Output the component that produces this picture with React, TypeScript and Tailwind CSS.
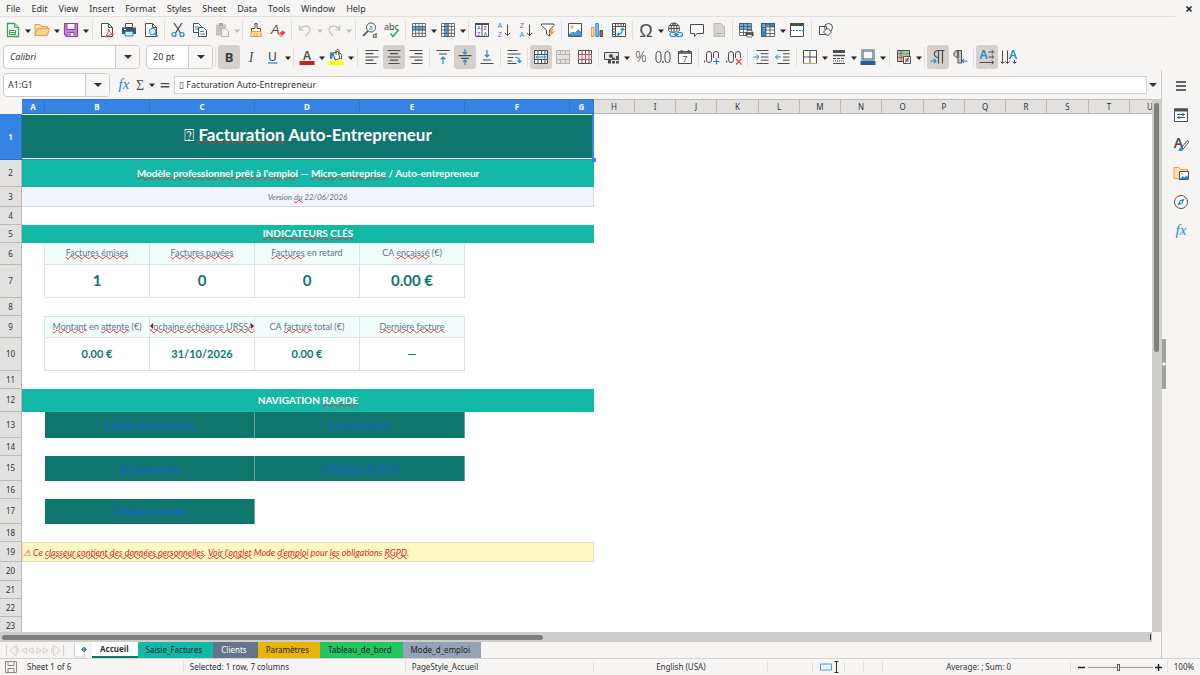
import type { ReactNode } from "react";

const G = "#4d4d4d";
const B = "#1e8bcd";
const SANS = "Liberation Sans, sans-serif";

const line = { fill: "none", stroke: G, strokeWidth: 1 } as const;
const blue = { fill: "none", stroke: B, strokeWidth: 1 } as const;

const grid3 = (
  <path d="M1.5 1.5h13v13h-13zM1.5 4.5h13M1.5 8h13M1.5 11.3h13M4.7 1.5v13M8 1.5v13M11.3 1.5v13" {...line} />
);

const icons: Record<string, ReactNode> = {
  new: (
    <>
      <path d="M2.5 1.5h7l4 4v9h-11z" fill="#fff" stroke="#3aa655" strokeWidth="1.3" />
      <path d="M9.5 1.5v4h4" fill="#b6e3c0" stroke="#3aa655" />
      <path d="M4 8h7v5H4z" fill="#3aa655" />
      <path d="M5 9.5h5M5 11.5h5" stroke="#fff" />
    </>
  ),
  open: (
    <>
      <path d="M1 13.5v-11h5l1.5 2h6v3" fill="#fbe3b5" stroke="#eb9a3f" />
      <path d="M1 13.5L3.5 6.5h12l-2.2 7z" fill="#fbd48c" stroke="#eb9a3f" />
    </>
  ),
  save: (
    <>
      <path d="M1.5 1.5h13v13h-11l-2-2z" fill="#c783d3" stroke="#9a3fb0" strokeWidth="1.2" />
      <path d="M4 1.5h8v6H4z" fill="#fff" stroke="#9a3fb0" />
      <path d="M5 10.5h6v4H5z" fill="#fff" stroke="#9a3fb0" />
      <path d="M7 11.5v2.5" stroke="#9a3fb0" strokeWidth="1.4" />
    </>
  ),
  pdf: (
    <>
      <path d="M2.5 1.5h7l4 4v9h-11z" fill="#fff" stroke={G} />
      <path d="M9.5 1.5v4h4" {...line} />
      <path d="M6 15c2-2 4-6 3.5-8 .5 3 3 5 5.5 5.5-3-.3-6 .5-9 2.5" fill="#fff" stroke="#e0454f" />
    </>
  ),
  print: (
    <>
      <path d="M4.5 1.5h7v4h-7z" fill="#fff" stroke={G} />
      <path d="M1 5.5h14v6.5H1z" fill="#4a5258" />
      <path d="M4 9.5h8v4.5H4z" fill="#d7ecfa" stroke={B} />
      <path d="M3 7.5h2" stroke="#fff" />
    </>
  ),
  preview: (
    <>
      <path d="M2.5 1.5h7l4 4v9h-11z" fill="#fff" stroke={G} />
      <path d="M9.5 1.5v4h4" {...line} />
      <circle cx="9.5" cy="9.5" r="3.2" fill="#d7ecfa" stroke={B} />
      <path d="M11.8 11.8l3 3" stroke={B} strokeWidth="1.5" />
    </>
  ),
  cut: (
    <>
      <path d="M4 1l6.5 10M12 1L5.5 11" {...line} strokeWidth="1.3" />
      <circle cx="4" cy="12.5" r="2" {...blue} strokeWidth="1.2" />
      <circle cx="12" cy="12.5" r="2" {...blue} strokeWidth="1.2" />
    </>
  ),
  copy: (
    <>
      <path d="M1.5 1.5h5l3 3v6h-8z" fill="#fff" stroke={G} />
      <path d="M3 5h4M3 7h4" {...blue} />
      <path d="M6.5 5.5h5l3 3v6h-8z" fill="#fff" stroke={G} />
      <path d="M8 9.5h4M8 12h5" {...blue} />
    </>
  ),
  paste: (
    <>
      <path d="M2 2.5h10v11H2z" fill="#c6c4c1" />
      <path d="M5 1h4v3H5z" fill="#a9a7a4" />
      <path d="M7.5 6.5h4l3 3v5h-7z" fill="#f3f2f1" stroke="#b4b2af" />
    </>
  ),
  brush: (
    <>
      <path d="M7 1.5h2v5h3.5v3h-9v-3H7z" fill="#fff" stroke={G} />
      <path d="M3.5 9.5h9l1 5h-11z" fill="#fbd9a0" stroke="#eb9a3f" />
      <path d="M6 12v2.5M9 12v2.5" stroke="#eb9a3f" />
    </>
  ),
  clear: (
    <>
      <text x="1" y="12" fontSize="13" fontStyle="italic" fill={G} fontFamily={SANS}>A</text>
      <path d="M8 12.5l4.5-4 3 2-4.5 4.5z" fill="#e5484d" />
      <path d="M8 12.5l1.5-1.3 2.5 2.3-1 1.5z" fill="#f6a6a8" />
    </>
  ),
  undo: <path d="M2.5 3.5v4.5h4.5M2.5 8c3-5 10-5 10.500-.5.2 2.500-2 4.500-4.500 6.500" {...line} stroke="#c2c0bd" strokeWidth="1.200" />,
  redo: <path d="M13.500 3.500v4.500h-4.500M13.500 8c-3-5-10-5-10.500-.5-.2 2.500 2 4.500 4.500 6.500" {...line} stroke="#c2c0bd" strokeWidth="1.200" />,
  find: (
    <>
      <circle cx="9" cy="5.5" r="4.5" fill="#fff" stroke={G} />
      <path d="M6 9l-5 5" stroke={G} strokeWidth="1.7" />
      <text x="6.8" y="7.8" fontSize="7" fill={B} fontFamily={SANS}>a</text>
      <text x="10.500" y="15.500" fontSize="7.500" fontWeight="700" fill={G} fontFamily={SANS}>d</text>
    </>
  ),
  spell: (
    <>
      <text x="0" y="7.5" fontSize="9" fill={G}>abc</text>
      <path d="M6.5 11.5l2.5 3 5.5-6.5" fill="none" stroke="#3aa655" strokeWidth="1.5" />
    </>
  ),
  rows: (
    <>
      <path d="M1 1h14v14H1z" fill="#fff" />
      <path d="M1 4.5h14v4H1z" fill="#5eb3ea" />
      <g opacity=".8">{grid3}</g>
    </>
  ),
  cols: (
    <>
      <path d="M1 1h14v14H1z" fill="#fff" />
      <path d="M4.5 1h4.5v14H4.5z" fill="#5eb3ea" />
      <g opacity=".8">{grid3}</g>
    </>
  ),
  sort: (
    <>
      <path d="M1.5 1.5h13v13h-13zM8 3v11.5" fill="#fff" stroke={G} />
      <path d="M1 1h14v2H1z" fill={G} />
      <g fontSize="5" fontWeight="700" fontFamily={SANS} textAnchor="middle">
        <text x="4.8" y="7.7" fill={B}>A</text>
        <text x="4.8" y="13.7" fill="#a64ac9">Z</text>
        <text x="11.3" y="7.7" fill="#a64ac9">Z</text>
        <text x="11.3" y="13.7" fill={B}>A</text>
      </g>
    </>
  ),
  asc: (
    <>
      <g fontSize="7" fontFamily={SANS} textAnchor="middle">
        <text x="3.8" y="6.2" fill={B}>A</text>
        <text x="3.8" y="14.8" fill="#a64ac9">Z</text>
      </g>
      <path d="M11.5 2.5v11M8.8 10.8l2.7 2.7 2.7-2.7" {...line} />
    </>
  ),
  desc: (
    <>
      <g fontSize="7" fontFamily={SANS} textAnchor="middle">
        <text x="3.8" y="6.2" fill="#a64ac9">Z</text>
        <text x="3.8" y="14.8" fill={B}>A</text>
      </g>
      <path d="M11.5 2.5v11M8.8 10.8l2.7 2.7 2.7-2.7" {...line} />
    </>
  ),
  filter: (
    <>
      <path d="M1.5 2h12.5v1.5L9.5 8v6l-3-2V8l-5-4.5z" fill="#fff" stroke={G} />
      <path d="M12 6.5L8.5 11h2.5l-1.5 4 5-5.5H12l1.5-3z" fill="#f39b3b" />
    </>
  ),
  image: (
    <>
      <path d="M1.5 1.5h13v13h-13z" fill="#fff" stroke={G} />
      <circle cx="5" cy="5" r="1.7" fill="#f5b251" />
      <path d="M2 13l4-3 2 1.5L11 8l3.5 3v3H2z" fill="#4e9fd8" stroke="#2775ad" />
    </>
  ),
  chart: (
    <>
      <path d="M2.500 5.500h2.500v9H2.500z" fill="#fbd48c" stroke="#eb9a3f" />
      <path d="M6.800 1.500h2.500v13H6.800z" fill="#8cc7ef" stroke={B} />
      <path d="M11 8.500h2.500v6H11z" fill="#7c7c7c" stroke={G} />
    </>
  ),
  pivot: (
    <>
      <path d="M1.5 1.5h13v13h-13zM1.5 4.5h13M4.5 1.5v13" fill="#fff" stroke={G} />
      <path d="M7 1.5v3M10 1.5v3M12.5 1.5v3M1.5 7h3M1.5 10h3M1.5 12.5h3" {...line} />
      <path d="M6.5 12.5c4 0 5-2 5-6M9.8 8l1.7-1.7L13.2 8M8 10.800l-1.700 1.700L8 14" {...blue} strokeWidth="1.2" />
    </>
  ),
  omega: <text x="8" y="14.500" fontSize="18" textAnchor="middle" fill={G} fontFamily={SANS}>Ω</text>,
  link: (
    <>
      <circle cx="7" cy="6.5" r="5.5" {...line} />
      <path d="M7 1v11M1.5 6.5h11M2.5 3.5h9M2.5 9.5h9M7 1c-4 3-4 8 0 11M7 1c4 3 4 8 0 11" {...line} />
      <path d="M2.5 9.5h13v6h-13z" fill="#f6f5f4" />
      <rect x="3" y="10.5" width="6" height="4" rx="2" {...blue} strokeWidth="1.2" />
      <rect x="9.5" y="10.5" width="6" height="4" rx="2" {...blue} strokeWidth="1.2" />
      <path d="M7 12.5h5" {...blue} />
    </>
  ),
  comment: <path d="M1.5 2.5h13v9H8l-2.5 3v-3h-4z" fill="#fff" stroke={G} />,
  header: (
    <>
      <path d="M3 1.5h7l3.5 3.5v9.5H3z" fill="#d5d3d1" stroke="#bbb9b6" />
      <path d="M5 11.5h6" stroke="#aaa" />
    </>
  ),
  printArea: (
    <>
      <path d="M1 1h12v12H1z" fill="#fff" />
      <path d="M1 1h12v6H1z" fill="#5eb3ea" />
      <path d="M1.5 1.5h12v12h-12zM1.5 4.5h12M1.5 7.5h12M1.5 10.5h12M5.5 1.5v12M9.5 1.5v12" {...line} opacity=".8" />
      <path d="M7.5 10h8v4h-8z" fill={G} />
      <path d="M9 8.500h5v2H9zM9 12.500h5v2.500H9z" fill="#fff" stroke={G} strokeWidth=".7" />
    </>
  ),
  freeze: (
    <>
      <path d="M1.5 1.5h13v13h-13z" fill="#fff" />
      <path d="M1 1h14v4H6v10H1z" fill="#2f86c8" />
      <path d="M1.5 1.5h13v13h-13zM1.5 5h13M6 8h8.500M6 11.500h8.500M6 1.500v13M10 1.500v13" {...line} opacity=".8" />
      <path d="M4 0v9M0 4h9" stroke="#9fd2f3" strokeDasharray="1 1" />
    </>
  ),
  split: (
    <>
      <path d="M1.5 1.5h13v13h-13z" fill="#fff" stroke={G} />
      <path d="M1 1h14v3H1z" fill={G} />
      <path d="M1 8.5h14" stroke={B} strokeDasharray="2 1" />
    </>
  ),
  shapes: (
    <>
      <path d="M1.5 4.5h7v8h-7z" {...line} />
      <circle cx="10.5" cy="5.5" r="4" {...line} />
      <path d="M9.5 6l4 4-4 4-4-4z" fill="#f6f5f4" stroke={G} />
    </>
  ),
  bold: <text x="8" y="13" fontSize="13" fontWeight="700" textAnchor="middle" fill="#3a3a3a">B</text>,
  italic: <text x="8" y="13" fontSize="14" fontStyle="italic" textAnchor="middle" fill={G} fontFamily="Liberation Serif, serif">I</text>,
  underline: (
    <>
      <text x="7.500" y="11.500" fontSize="12" textAnchor="middle" fill="#3a3a3a">U</text>
      <path d="M3 14h9.500" stroke={B} strokeWidth="1.2" />
    </>
  ),
  fontColor: (
    <>
      <text x="8" y="10.500" fontSize="12" fontWeight="600" textAnchor="middle" fill={G}>A</text>
      <path d="M.5 12h15v4H.5z" fill="#c9211e" />
    </>
  ),
  highlight: (
    <>
      <path d="M5 4l5-1.5 2 7L7 11z" fill="#fff" stroke={G} />
      <path d="M8 6V2c0-2 3-2 3 0v3M12 4c1.5 1 2 3 1.5 6" {...line} />
      <path d="M2 3.5h3.5L4 10H2z" fill={B} />
      <path d="M.5 12h15v4H.5z" fill="#ff0" />
    </>
  ),
  left: <path d="M1.5 1.5h13M1.5 4.7h8M1.5 8h13M1.5 11.2h8M1.5 14.5h11" {...line} strokeWidth="1.2" />,
  center: <path d="M1.5 1.5h13M4 4.7h8M1.5 8h13M4 11.2h8M2.5 14.5h11" {...line} strokeWidth="1.2" />,
  right: <path d="M1.5 1.5h13M6.5 4.7h8M1.5 8h13M6.5 11.2h8M3.5 14.5h11" {...line} strokeWidth="1.2" />,
  top: (
    <>
      <path d="M1.5 1.5h13M4 5h8" {...line} strokeWidth="1.2" />
      <path d="M8 15V8M5.7 10.2L8 8l2.3 2.2" {...blue} strokeWidth="1.2" />
    </>
  ),
  middle: (
    <>
      <path d="M1.5 6.7h13M4 9.3h8" {...line} strokeWidth="1.2" />
      <path d="M8 0v5M6 3.2L8 5l2-1.8M8 16v-5M6 12.8L8 11l2 1.8" {...blue} strokeWidth="1.2" />
    </>
  ),
  bottom: (
    <>
      <path d="M4 11h8M1.5 14.5h13" {...line} strokeWidth="1.2" />
      <path d="M8 1v7M5.7 5.8L8 8l2.3-2.2" {...blue} strokeWidth="1.2" />
    </>
  ),
  wrap: (
    <>
      <path d="M1.5 1.5h10M1.5 5h13M1.5 8.5h6M1.5 12h5M1.5 14.5h9" {...line} />
      <path d="M9 8.5c4 0 4.5 1 4.5 4.5M11.5 11.5l2 2 2-2" {...blue} strokeWidth="1.2" />
    </>
  ),
  merge: (
    <>
      <path d="M1.5 1.5h13v13h-13zM1.5 5.5h13M1.5 10.5h13M5 1.5v4M8.5 1.5v4M12 1.5v4M5 10.5v4M8.5 10.5v4M12 10.5v4" fill="#fff" stroke={G} />
      <path d="M2 6h12v4H2z" fill="#d7ecfa" />
      <path d="M3 8h10M5 6.5L3.3 8 5 9.5M11 6.5L12.7 8 11 9.5" {...blue} />
    </>
  ),
  mergeCells: (
    <path d="M1.5 1.5h13v13h-13zM1.5 5.5h13M1.5 10.5h13M5.5 1.5v4M10.5 1.5v4M5.5 10.5v4M10.5 10.5v4" fill="#e4e2e0" stroke="#b4b2af" />
  ),
  unmerge: (
    <>
      <path d="M1.5 1.5h13v13h-13zM5 1.5v4M8.5 1.5v4M12 1.5v4M5 10.5v4M8.5 10.5v4M12 10.5v4" fill="#fff" stroke={G} />
      <path d="M1.5 5.5h13v5h-13zM5 5.5v5M8.5 5.5v5M12 5.5v5" fill="#fff" stroke="#e0454f" />
    </>
  ),
  currency: (
    <>
      <path d="M.5 3.5h14v7H.5z" fill="#e9e7e5" stroke={G} />
      <circle cx="7" cy="7" r="2" fill={G} />
      <path d="M8 8.5h3v6H8zM12 7h3v7.5h-3zM4 11h3v3.5H4z" fill={G} />
      <path d="M8 11.5h7" stroke="#e9e7e5" />
    </>
  ),
  percent: <text x="8" y="13" fontSize="14" fontWeight="300" textAnchor="middle" fill={G}>%</text>,
  number: (
    <>
      <rect x="1" y="2.5" width="5" height="11" rx="2.5" {...line} />
      <rect x="10" y="2.5" width="5" height="11" rx="2.5" {...line} />
      <path d="M8 12v2" stroke={G} strokeWidth="1.3" />
    </>
  ),
  date: (
    <>
      <path d="M1.5 2.5h13v12h-13z" fill="#fff" stroke={G} />
      <path d="M1.5 4h13M4.5 1v3M11.5 1v3" stroke={G} strokeWidth="1.5" />
      <text x="8" y="13" fontSize="9" textAnchor="middle" fill={G} fontFamily={SANS}>7</text>
    </>
  ),
  addDecimal: (
    <>
      <path d="M.7 11.5v2" stroke={G} strokeWidth="1.2" />
      <rect x="2.500" y="2.500" width="5" height="11" rx="2.500" {...line} />
      <rect x="9.500" y="2.500" width="5" height="11" rx="2.500" {...line} />
      <path d="M9 9h7v7H9z" fill="#f6f5f4" />
      <path d="M12.5 9.5v6M9.5 12.5h6" {...blue} strokeWidth="1.2" />
    </>
  ),
  delDecimal: (
    <>
      <path d="M.7 11.5v2" stroke={G} strokeWidth="1.2" />
      <rect x="2.500" y="2.500" width="5" height="11" rx="2.500" {...line} />
      <rect x="9.500" y="2.500" width="5" height="11" rx="2.500" {...line} />
      <path d="M9 9h7v7H9z" fill="#f6f5f4" />
      <path d="M10 10l5.5 5.5M15.5 10L10 15.5" fill="none" stroke="#e0454f" strokeWidth="1.2" />
    </>
  ),
  indent: (
    <>
      <path d="M3.5 1.5h12M8 4.7h7.5M8 8h7.5M8 11.2h7.5M3.5 14.5h12" {...line} />
      <path d="M.5 8h5.5M3.5 5.5L6 8l-2.5 2.5" {...blue} />
    </>
  ),
  outdent: (
    <>
      <path d="M2.5 1.5h12M8 4.7h6.5M8 8h6.5M8 11.2h6.5M2.5 14.5h12" {...line} />
      <path d="M6 8H.5M3 5.5L.5 8 3 10.5" {...blue} />
    </>
  ),
  borders: (
    <>
      <path d="M1.5 14.5v-13h13v13M1.5 8h13M8 1.5v13" fill="#fff" stroke={G} />
      <path d="M1 14.5h14" stroke="#eb9a3f" />
    </>
  ),
  borderStyle: (
    <>
      <path d="M2 2.5h12" stroke={G} strokeWidth="3" />
      <path d="M2 6.5h12" stroke={G} strokeWidth="1.5" />
      <path d="M2 9.5h12" stroke={G} strokeDasharray="3 1" />
      <path d="M2 12h12" stroke={G} strokeDasharray="1 1" />
      <path d="M2 14.5h12" stroke={G} />
    </>
  ),
  borderColor: (
    <>
      <path d="M2.5 1.5h11v9h-11z" fill="#f6f5f4" stroke={G} strokeWidth="2" />
      <path d="M2.5 1.5h11v9h-11z" fill="none" stroke="#8cc7ef" strokeWidth=".8" />
      <path d="M.5 12h15v4H.5z" fill="#1f5f9f" />
    </>
  ),
  conditional: (
    <>
      <path d="M1.5 1.5h12v11h-12z" fill="#fff" stroke={G} />
      <path d="M2 2h11v3H2z" fill="#8fd19e" />
      <path d="M2 5.5h11v3H2z" fill="#f4a3a3" />
      <path d="M2 9h11v3H2z" fill="#f9c97c" />
      <path d="M5 1.5v11M1.5 5h12M1.5 8.5h12" {...line} strokeWidth=".7" />
      <path d="M7.5 7.5h7v7h-7z" fill="#fff" stroke={G} />
      <path d="M9 10h4M9 12h4M12.5 8.5l-3 5" {...line} />
    </>
  ),
  ltr: (
    <>
      <path d="M8.5 8.5c-5.5 0-5.5-7 0-7h6M8.5 1.5v13M12.5 1.5v13" {...line} strokeWidth="1.2" />
      <path d="M.5 12h5.5M3.8 9.8L6 12l-2.2 2.2" {...blue} strokeWidth="1.2" />
    </>
  ),
  rtl: (
    <>
      <path d="M6 8.5c-5.5 0-5.5-7 0-7zM6 1.500h3.500v12.500H6z" fill="#c9c7c4" stroke={G} />
      <path d="M15.5 12H10M12.2 9.8L10 12l2.2 2.2" {...blue} strokeWidth="1.2" />
    </>
  ),
  horizontal: (
    <>
      <text x="4.500" y="9.800" fontSize="12" fontWeight="600" textAnchor="middle" fill={B}>A</text>
      <path d="M9.5 3h5M12.8 1.2L14.700 3l-1.900 1.800M9.500 8h5M12.800 6.200L14.700 8l-1.900 1.800M.500 13.500h14M12.800 11.700L14.700 13.500l-1.900 1.800" {...line} />
    </>
  ),
  vertical: (
    <>
      <text x="12" y="9.800" fontSize="12" fontWeight="600" textAnchor="middle" fill={B}>A</text>
      <path d="M1.500 1.500v13M-.3 12.600l1.800 1.900 1.800-1.900M6.500 1.500v13M4.700 12.600l1.800 1.900 1.800-1.900M13.500 11v3.500M11.700 12.600l1.800 1.900 1.800-1.900" {...line} />
    </>
  ),
  fx: (
    <text x="8" y="12" fontSize="15" fontStyle="italic" textAnchor="middle" fill={B} fontFamily="Liberation Serif, serif">
      fx
    </text>
  ),
  sigma: <text x="8" y="13.500" fontSize="16" textAnchor="middle" fill={G} fontFamily="Liberation Serif, serif">Σ</text>,
  equals: <path d="M3 6.5h10M3 10h10" {...line} strokeWidth="1.5" />,
  menu: <path d="M3 4h10M3 8h10M3 12h10" stroke="#333" strokeWidth="1.5" />,
  properties: (
    <>
      <path d="M1.5 2h13v12.5h-13z" fill="#fff" stroke={G} />
      <path d="M1 1.5h14v3H1z" fill={G} />
      <path d="M4 7.5h8M4 10.5h8" {...line} />
      <path d="M10 6v3M6 9v3" {...blue} strokeWidth="1.5" />
    </>
  ),
  styles: (
    <>
      <text x="5.500" y="11.500" fontSize="14" fontWeight="600" textAnchor="middle" fill={G}>A</text>
      <path d="M9 11l5-6c1.500-.5 2 .5 1.500 1.500l-5 6z" fill="#fff" stroke={G} />
      <path d="M4.500 14.500c2 0 2-3.500 4.500-3.500l1.500 1.500c0 2.500-3 3-6 2z" fill={B} />
    </>
  ),
  gallery: (
    <>
      <path d="M1 13.5v-11h5l1.5 2h7v9z" fill="#fbe3b5" stroke="#eb9a3f" />
      <path d="M6.5 6.5h9v8h-9z" fill="#fff" stroke={G} />
      <path d="M7 14l2.500-3 2 1.500 2-2 2 2V14z" fill="#2f86c8" />
      <circle cx="9" cy="8.800" r="1" fill="#f5b251" />
    </>
  ),
  navigator: (
    <>
      <circle cx="8" cy="8" r="6.5" fill="#fff" stroke={G} />
      <path d="M11.5 4.5L9.5 9.5l-5 2 2-5z" fill={B} />
      <circle cx="8" cy="8" r="1" fill="#fff" />
    </>
  ),
  statusSave: (
    <path d="M2.5 2.5h11v11h-11zM5 2.5h6v4H5zM5 9.5h6v4H5z" {...line} stroke="#8b8987" />
  ),
  addSheet: (
    <>
      <path d="M2.5 1v14h10V5" fill="#fff" stroke="#d5d2cf" />
      <circle cx="12" cy="7.5" r="1.800" fill="#fff" stroke="#2a5db0" />
      <path d="M12 5v5M9.500 7.500h5" stroke="#2a5db0" strokeWidth=".7" />
    </>
  ),
};

function Icon({ name }: { name: string }) {
  return (
    <svg viewBox="0 0 16 16" className="size-4 shrink-0 overflow-visible" aria-hidden="true">
      {icons[name]}
    </svg>
  );
}

function Caret({ faded }: { faded?: boolean }) {
  return (
    <svg viewBox="0 0 6 4" className={faded ? "h-1 w-1.5 text-[#c2c0bd]" : "h-1 w-1.5 text-[#222]"} aria-hidden="true">
      <path d="M0 .5h6L3 4z" fill="currentColor" />
    </svg>
  );
}

type Tool = { icon: string; label: string; menu?: boolean; on?: boolean; off?: boolean };

function ToolButton({ icon, label, menu, on, off }: Tool) {
  return (
    <>
      <button
        type="button"
        aria-label={label}
        aria-pressed={on}
        className={
          on
            ? "flex h-6 w-[22px] shrink-0 items-center justify-center rounded-[3px] bg-[#d5d0cc]"
            : "flex h-6 w-[22px] shrink-0 items-center justify-center rounded-[3px]"
        }
      >
        <Icon name={icon} />
      </button>
      {menu && (
        <button type="button" aria-label={`${label} options`} className="flex h-6 w-[7px] shrink-0 items-center justify-center pt-0.5">
          <Caret faded={off} />
        </button>
      )}
    </>
  );
}

function Separator({ wide }: { wide?: boolean }) {
  return (
    <span className={wide ? "flex w-[7px] shrink-0 justify-center" : "flex w-[5px] shrink-0 justify-center"}>
      <span className="h-5 w-px bg-[#e2e0dd]" />
    </span>
  );
}

function Tools({ items }: { items: (Tool | "|" | "||")[] }) {
  return (
    <>
      {items.map((t, i) =>
        typeof t === "string" ? <Separator key={i} wide={t === "||"} /> : <ToolButton key={i} {...t} />
      )}
    </>
  );
}

const standard: (Tool | "|" | "||")[] = [
  { icon: "new", label: "New", menu: true },
  { icon: "open", label: "Open", menu: true },
  { icon: "save", label: "Save", menu: true },
  "||",
  { icon: "pdf", label: "Export as PDF" },
  { icon: "print", label: "Print" },
  { icon: "preview", label: "Print Preview" },
  "|",
  { icon: "cut", label: "Cut" },
  { icon: "copy", label: "Copy" },
  { icon: "paste", label: "Paste", menu: true, off: true },
  "|",
  { icon: "brush", label: "Clone Formatting" },
  { icon: "clear", label: "Clear Formatting" },
  "|",
  { icon: "undo", label: "Undo", menu: true, off: true },
  { icon: "redo", label: "Redo", menu: true, off: true },
  "||",
  { icon: "find", label: "Find and Replace" },
  { icon: "spell", label: "Spelling" },
  "|",
  { icon: "rows", label: "Row", menu: true },
  { icon: "cols", label: "Column", menu: true },
  "|",
  { icon: "sort", label: "Sort" },
  { icon: "asc", label: "Sort Ascending" },
  { icon: "desc", label: "Sort Descending" },
  { icon: "filter", label: "AutoFilter" },
  "|",
  { icon: "image", label: "Insert Image" },
  { icon: "chart", label: "Insert Chart" },
  { icon: "pivot", label: "Insert Pivot Table" },
  "|",
  { icon: "omega", label: "Special Character", menu: true },
  { icon: "link", label: "Insert Hyperlink" },
  { icon: "comment", label: "Insert Comment" },
  { icon: "header", label: "Headers and Footers" },
  "|",
  { icon: "printArea", label: "Define Print Area" },
  { icon: "freeze", label: "Freeze Rows and Columns", menu: true },
  { icon: "split", label: "Split Window" },
  "||",
  { icon: "shapes", label: "Show Draw Functions" },
];

const formatting: (Tool | "|" | "||")[] = [
  "|",
  { icon: "bold", label: "Bold", on: true },
  { icon: "italic", label: "Italic" },
  { icon: "underline", label: "Underline", menu: true },
  "|",
  { icon: "fontColor", label: "Font Color", menu: true },
  { icon: "highlight", label: "Background Color", menu: true },
  "||",
  { icon: "left", label: "Align Left" },
  { icon: "center", label: "Center Horizontally", on: true },
  { icon: "right", label: "Align Right" },
  "|",
  { icon: "top", label: "Align Top" },
  { icon: "middle", label: "Center Vertically", on: true },
  { icon: "bottom", label: "Align Bottom" },
  "|",
  { icon: "wrap", label: "Wrap Text" },
  "|",
  { icon: "merge", label: "Merge and Center", on: true },
  { icon: "mergeCells", label: "Merge Cells", off: true },
  { icon: "unmerge", label: "Unmerge Cells" },
  "|",
  { icon: "currency", label: "Format as Currency", menu: true },
  { icon: "percent", label: "Format as Percent" },
  { icon: "number", label: "Format as Number" },
  { icon: "date", label: "Format as Date" },
  "|",
  { icon: "addDecimal", label: "Add Decimal Place" },
  { icon: "delDecimal", label: "Delete Decimal Place" },
  "|",
  { icon: "indent", label: "Increase Indent" },
  { icon: "outdent", label: "Decrease Indent" },
  "|",
  { icon: "borders", label: "Borders", menu: true },
  { icon: "borderStyle", label: "Border Style", menu: true },
  { icon: "borderColor", label: "Border Color", menu: true },
  "||",
  { icon: "conditional", label: "Conditional Formatting", menu: true },
  "|",
  { icon: "ltr", label: "Left-To-Right", on: true },
  { icon: "rtl", label: "Right-To-Left" },
  "|",
  { icon: "horizontal", label: "Text Direction Left to Right", on: true },
  { icon: "vertical", label: "Text Direction Top to Bottom" },
];

const menus = ["File", "Edit", "View", "Insert", "Format", "Styles", "Sheet", "Data", "Tools", "Window", "Help"];

function Combo({ label, value, className, selectClass }: { label: string; value: string; className: string; selectClass: string }) {
  return (
    <div className={`relative flex h-6 shrink-0 overflow-hidden rounded-[4px] border border-[#cfccc8] bg-white ${className}`}>
      <select aria-label={label} defaultValue={value} className={`w-full appearance-none bg-transparent pl-1.5 text-[9px] outline-none ${selectClass}`}>
        <option>{value}</option>
      </select>
      <span className="pointer-events-none absolute inset-y-0 right-0 flex w-6 items-center justify-center border-l border-[#cfccc8] bg-[#f8f7f6]">
        <svg viewBox="0 0 8 4" className="h-1 w-2" aria-hidden="true">
          <path d="M0 0h8L4 4z" fill="#2e3436" />
        </svg>
      </span>
    </div>
  );
}

/* Spell-check marking under a word */
function Sp({ children }: { children: ReactNode }) {
  return (
    <span className="underline decoration-[#e03030] decoration-wavy decoration-1 [text-decoration-skip-ink:none] [text-underline-offset:-1px]">
      {children}
    </span>
  );
}

function Missing() {
  return <span className="font-['DejaVu_Sans'] font-normal">⍰</span>;
}

const columns: [string, string][] = [
  ["A", "w-[23px]"],
  ["B", "w-[105px]"],
  ["C", "w-[105px]"],
  ["D", "w-[105px]"],
  ["E", "w-[105px]"],
  ["F", "w-[105px]"],
  ["G", "w-[24px]"],
  ["H", "w-[41px]"],
  ["I", "w-[41px]"],
  ["J", "w-[41px]"],
  ["K", "w-[42px]"],
  ["L", "w-[41px]"],
  ["M", "w-[41px]"],
  ["N", "w-[41px]"],
  ["O", "w-[42px]"],
  ["P", "w-[41px]"],
  ["Q", "w-[41px]"],
  ["R", "w-[41px]"],
  ["S", "w-[42px]"],
  ["T", "w-[41px]"],
  ["U", "w-[41px]"],
];

function Row({ n, h, active, children }: { n: number; h: string; active?: boolean; children?: ReactNode }) {
  return (
    <tr className={h}>
      <th
        scope="row"
        className={
          active
            ? "border-r border-b border-[#2a6fc4] bg-[#3584e4] p-0 font-['Noto_Sans'] text-[8px] font-bold text-white"
            : "border-r border-b border-[#bcbab7] bg-[#e2e1df] p-0 font-['Noto_Sans'] text-[8px] font-normal"
        }
      >
        {n}
      </th>
      {children}
    </tr>
  );
}

function Banner({ children }: { children: ReactNode }) {
  return (
    <td colSpan={7} className="bg-[#14b8a6] p-0 pb-0.5 text-center text-[10px] font-bold text-white">
      {children}
    </td>
  );
}

function Labels({ items, first }: { items: ReactNode[]; first?: boolean }) {
  return (
    <>
      <td className="border-r border-[#e2e8f0] p-0" />
      {items.map((c, i) => (
        <td
          key={i}
          className={
            first
              ? "border-r border-b border-[#dbe3ea] bg-[#f0fdfa] p-0 pb-0.5 text-center text-[9px] text-[#64748b]"
              : "border-t border-r border-b border-[#dbe3ea] bg-[#f0fdfa] p-0 pb-0.5 text-center text-[9px] text-[#64748b]"
          }
        >
          {c}
        </td>
      ))}
    </>
  );
}

function Values({ items, big }: { items: string[]; big?: boolean }) {
  return (
    <>
      <td className="border-r border-[#e2e8f0] p-0" />
      {items.map((c, i) => (
        <td
          key={i}
          className={
            big
              ? "border-r border-b border-[#dbe3ea] p-0 pb-0.5 text-center text-[15px] font-bold text-[#0f766e]"
              : "border-r border-b border-[#dbe3ea] p-0 pb-0.5 text-center text-[11px] font-bold text-[#0f766e]"
          }
        >
          {c}
        </td>
      ))}
    </>
  );
}

function NavCell({ children }: { children: ReactNode }) {
  return (
    <td colSpan={2} className="border-r border-[#5fa39d] bg-[#0f766e] p-0 pb-0.5 text-center text-[10px]">
      <a href="#" className="font-bold text-[#1565b4] underline">
        {children}
      </a>
    </td>
  );
}

function Sheet() {
  return (
    <table className="w-[1153px] table-fixed border-separate border-spacing-0 bg-white leading-none">
      <colgroup>
        <col className="w-[22px]" />
        {columns.map(([c, w]) => (
          <col key={c} className={w} />
        ))}
      </colgroup>
      <thead>
        <tr className="h-[15px]">
          <td className="bg-[#f6f5f4] p-0" />
          {columns.map(([c], i) => (
            <th
              key={c}
              scope="col"
              className={
                i < 7
                  ? "border-t border-r border-b border-[#2f78d0] bg-[#3584e4] p-0 pt-px text-[8px] font-bold text-white"
                  : "border-t border-r border-b border-[#bcbab7] bg-[#e2e1df] p-0 pt-px text-[8px] font-normal"
              }
            >
              {c}
            </th>
          ))}
        </tr>
      </thead>
      <tbody className="font-[Lato,sans-serif]">
        <Row n={1} h="h-[46px]" active>
          <td colSpan={7} className="relative bg-[#0f766e] p-0 pb-1 text-center text-[17px] font-bold text-white">
            <Missing /> <Sp>Facturation</Sp> Auto-Entrepreneur
            <span className="absolute inset-0 border-r-2 border-b border-[#3584e4]">
              <span className="absolute inset-0 border-y border-white" />
            </span>
            <span className="absolute -right-0.5 -bottom-0.5 size-1 bg-[#3584e4]" />
          </td>
        </Row>
        <Row n={2} h="h-[27px]">
          <td colSpan={7} className="bg-[#14b8a6] p-0 pb-0.5 text-center text-[10px] font-bold text-white">
            <Sp>Modèle professionnel prêt à l'emploi</Sp> — <Sp>Micro-entreprise</Sp> / Auto-entrepreneur
          </td>
        </Row>
        <Row n={3} h="h-[20px]">
          <td colSpan={7} className="border-r border-b border-[#d5dce6] bg-[#f1f5f9] p-0 text-center text-[8px] text-[#64748b] italic">
            Version <Sp>du</Sp> 22/06/2026
          </td>
        </Row>
        <Row n={4} h="h-[18px]" />
        <Row n={5} h="h-[18px]">
          <Banner>
            <Sp>INDICATEURS</Sp> <Sp>CLÉS</Sp>
          </Banner>
        </Row>
        <Row n={6} h="h-[22px]">
          <Labels
            first
            items={[
              <Sp>Factures émises</Sp>,
              <Sp>Factures payées</Sp>,
              <><Sp>Factures</Sp> en retard</>,
              <>CA <Sp>encaissé</Sp> (€)</>,
            ]}
          />
        </Row>
        <Row n={7} h="h-[33px]">
          <Values big items={["1", "0", "0", "0.00 €"]} />
        </Row>
        <Row n={8} h="h-[18px]" />
        <Row n={9} h="h-[22px]">
          <Labels
            items={[
              <><Sp>Montant</Sp> en <Sp>attente</Sp> (€)</>,
              <span className="relative flex h-4 items-center justify-center overflow-hidden whitespace-nowrap">
                <span className="shrink-0"><Sp>Prochaine échéance URSSAF</Sp></span>
                <svg viewBox="0 0 3 6" className="absolute left-0 h-1.5 w-[3px] bg-[#f0fdfa]" aria-hidden="true">
                  <path d="M3 0v6L0 3z" fill="#8b1a1a" />
                </svg>
                <svg viewBox="0 0 3 6" className="absolute right-0 h-1.5 w-[3px] bg-[#f0fdfa]" aria-hidden="true">
                  <path d="M0 0v6l3-3z" fill="#8b1a1a" />
                </svg>
              </span>,
              <>CA <Sp>facturé</Sp> total (€)</>,
              <Sp>Dernière facture</Sp>,
            ]}
          />
        </Row>
        <Row n={10} h="h-[33px]">
          <Values items={["0.00 €", "31/10/2026", "0.00 €", "—"]} />
        </Row>
        <Row n={11} h="h-[18px]" />
        <Row n={12} h="h-[23px]">
          <Banner>
            NAVIGATION <Sp>RAPIDE</Sp>
          </Banner>
        </Row>
        <Row n={13} h="h-[26px]">
          <td className="p-0" />
          <NavCell><Missing /> Saisie des Factures</NavCell>
          <NavCell><Missing /> Base Clients</NavCell>
        </Row>
        <Row n={14} h="h-[18px]" />
        <Row n={15} h="h-[25px]">
          <td className="p-0" />
          <NavCell>⚙ Paramètres</NavCell>
          <NavCell><Missing /> Tableau de Bord</NavCell>
        </Row>
        <Row n={16} h="h-[18px]" />
        <Row n={17} h="h-[25px]">
          <td className="p-0" />
          <NavCell><Missing /> Mode d'emploi</NavCell>
        </Row>
        <Row n={18} h="h-[18px]" />
        <Row n={19} h="h-[20px]">
          <td colSpan={7} className="border border-[#e6dfae] bg-[#fef9c3] p-0 text-left text-[9px] text-[#dc2626] italic">
            ⚠ Ce <Sp>classeur contient des données personnelles</Sp>. <Sp>Voir l'onglet</Sp> Mode <Sp>d'emploi</Sp> pour <Sp>les</Sp> obligations <Sp>RGPD</Sp>.
          </td>
        </Row>
        <Row n={20} h="h-[19px]" />
        <Row n={21} h="h-[18px]" />
        <Row n={22} h="h-[18px]" />
        <Row n={23} h="h-[18px]" />
      </tbody>
    </table>
  );
}

const tabs: [string, string][] = [
  ["Saisie_Factures", "bg-[#14b8a6] text-[#123]"],
  ["Clients", "bg-[#64748b] text-white"],
  ["Paramètres", "bg-[#eab308] text-[#222]"],
  ["Tableau_de_bord", "bg-[#22c55e] text-[#123]"],
  ["Mode_d_emploi", "bg-[#94a3b8] text-[#222]"],
];

const navArrows: [string, string][] = [
  ["First sheet", "M1.5 2v12M12 2.500L5 8l7 5.500zM14 5v6"],
  ["Previous sheet", "M7 5L2 8l5 3zM14 5L9 8l5 3z"],
  ["Next sheet", "M2 5l5 3-5 3zM9 5l5 3-5 3z"],
  ["Last sheet", "M14.5 2v12M4 2.500L11 8l-7 5.500zM2 5v6"],
];

export default function App() {
  return (
    <div className="flex h-screen flex-col overflow-hidden bg-[#f6f5f4] font-['Noto_Sans',sans-serif] text-[#2e3436]">
      <nav className="flex h-[17px] shrink-0 items-center justify-between pr-[7px] leading-none">
        <div className="mr-2.5 flex h-full grow items-center gap-[11px] border-b border-[#e2e0dd] pl-1.5">
          {menus.map((m) => (
            <button key={m} type="button" className="text-[9px]">
              {m}
            </button>
          ))}
        </div>
        <button type="button" aria-label="Close document">
          <svg viewBox="0 0 8 8" className="size-2" aria-hidden="true">
            <path d="M1.5 1.5l5 5M6.5 1.5l-5 5" stroke="#222" strokeWidth="1.6" />
          </svg>
        </button>
      </nav>
      <div className="flex h-[26px] shrink-0 items-center pl-0.5">
        <Tools items={standard} />
      </div>
      <div className="flex h-[27px] shrink-0 items-center pl-[3px]">
        <Combo label="Font Name" value="Calibri" className="mr-1.5 w-[137px]" selectClass="italic" />
        <Combo label="Font Size" value="20 pt" className="w-[67px]" selectClass="" />
        <Tools items={formatting} />
      </div>

      <div className="flex min-h-0 grow">
        <div className="flex min-w-0 grow flex-col">
          <div className="flex h-[29px] shrink-0 items-center pr-1 pl-[3px]">
            <div className="flex h-6 w-[107px] shrink-0 overflow-hidden rounded-[4px] border border-[#cfccc8] bg-white">
              <input aria-label="Name Box" defaultValue="A1:G1" className="w-0 grow pl-1 text-[9px] outline-none" />
              <button type="button" aria-label="Name Box list" className="flex w-6 items-center justify-center border-l border-[#cfccc8] bg-[#f8f7f6]">
                <svg viewBox="0 0 8 4" className="h-1 w-2" aria-hidden="true">
                  <path d="M0 0h8L4 4z" fill="#2e3436" />
                </svg>
              </button>
            </div>
            <span className="w-1.5 shrink-0" />
            <button type="button" aria-label="Function Wizard" className="flex w-4 justify-center">
              <Icon name="fx" />
            </button>
            <button type="button" aria-label="Select Function" className="flex w-4 items-center justify-center">
              <svg viewBox="0 0 16 16" className="size-3.5" aria-hidden="true">{icons.sigma}</svg>
            </button>
            <button type="button" aria-label="Select Function options" className="flex w-2 items-center justify-center">
              <Caret />
            </button>
            <button type="button" aria-label="Formula" className="mx-px flex w-4 items-center justify-center">
              <svg viewBox="0 0 16 16" className="size-3.5" aria-hidden="true">{icons.equals}</svg>
            </button>
            <input
              aria-label="Input line"
              defaultValue="▯ Facturation Auto-Entrepreneur"
              className="h-[18px] min-w-0 grow border border-[#d5d2cf] bg-white pl-1 text-[9px] outline-none"
            />
            <button type="button" aria-label="Expand Formula Bar" className="ml-0.5 flex w-2 items-center justify-center">
              <svg viewBox="0 0 8 4" className="h-1 w-2" aria-hidden="true">
                <path d="M0 0h8L4 4z" fill="#2e3436" />
              </svg>
            </button>
          </div>

          <div className="flex min-h-0 grow">
            <div className="min-w-0 grow overflow-hidden bg-white">
              <Sheet />
            </div>
            <div className="w-[9px] shrink-0 bg-[#cecdcc] px-0.5 pt-1">
              <div className="h-[47%] w-[5px] rounded-full bg-[#7f807e]" />
            </div>
          </div>
          <div className="flex h-2.5 shrink-0 pr-[9px]">
            <div className="flex grow items-center justify-between bg-[#cecdcc] pl-0.5">
              <div className="h-[5px] w-[47%] rounded-full bg-[#7f807e]" />
              <span className="mr-px h-1.5 w-px bg-[#333]" />
            </div>
          </div>

          <div className="flex h-4 shrink-0 items-stretch text-[8px] leading-none">
            <div className="flex w-[70px] items-center justify-center">
              {navArrows.map(([label, d]) => (
                <button key={label} type="button" aria-label={label}>
                  <svg viewBox="0 0 16 16" className="size-[15px]" aria-hidden="true">
                    <path d={d} fill="none" stroke="#cfcdca" strokeWidth="1" />
                  </svg>
                </button>
              ))}
            </div>
            <button type="button" aria-label="Add Sheet" className="mr-0.5 flex w-5 items-center justify-center">
              <Icon name="addSheet" />
            </button>
            <button type="button" className="border-b-2 border-[#0f766e] bg-white pr-[9px] pl-2 font-bold">
              Accueil
            </button>
            {tabs.map(([name, tone]) => (
              <button key={name} type="button" className={`pr-[11px] pl-2 ${tone}`}>
                {name}
              </button>
            ))}
          </div>
        </div>

        <aside className="relative flex w-[39px] shrink-0 flex-col items-center gap-[13px] border-l border-[#cfccc8] pt-2">
          {["menu", "properties", "styles", "gallery", "navigator", "fx"].map((name) => (
            <button key={name} type="button" aria-label={`Sidebar ${name}`}>
              <Icon name={name} />
            </button>
          ))}
          <button
            type="button"
            aria-label="Toggle sidebar"
            className="absolute top-[269px] left-0 flex h-[50px] w-1 items-center justify-center bg-[#a0a09e]"
          >
            <svg viewBox="0 0 4 4" className="size-1" aria-hidden="true">
              <circle cx="2" cy="2" r="1.800" fill="#fff" />
            </svg>
          </button>
        </aside>
      </div>

      <footer className="grid h-[17px] shrink-0 grid-cols-[22px_162fr_222fr_189fr_174fr_45fr_70fr_188fr_97px_32px] items-center border-t border-[#d5d2cf] text-[8px] leading-none *:flex *:h-3 *:items-center">
        <span className="justify-center"><Icon name="statusSave" /></span>
        <span className="border-r border-[#e2e0dd] pl-[5px]">Sheet 1 of 6</span>
        <span className="border-r border-[#e2e0dd] pl-1.5">Selected: 1 row, 7 columns</span>
        <span className="border-r border-[#e2e0dd] pl-1.5">PageStyle_Accueil</span>
        <span className="justify-center border-r border-[#e2e0dd]">English (USA)</span>
        <span className="border-r border-[#e2e0dd]" />
        <span className="gap-1 border-r border-[#e2e0dd] pl-[7px]">
          <svg viewBox="0 0 20 12" className="h-3 w-5" aria-hidden="true">
            <path d="M.5 3h11v6H.5z" fill="#eaf5fc" stroke="#4a9ccc" />
            <path d="M14.5.5h4M14.5 11.5h4M16.5.5v11" stroke="#333" fill="none" />
          </svg>
          <span className="h-3 w-px bg-[#e2e0dd]" />
          <span className="ml-3.5 h-3 w-px bg-[#e2e0dd]" />
        </span>
        <span className="justify-center border-r border-[#e2e0dd] pl-1">Average: ; Sum: 0</span>
        <span className="justify-between border-r border-[#e2e0dd] pr-[5px] pl-[7px]">
          <button type="button" aria-label="Zoom Out">
            <svg viewBox="0 0 7 7" className="size-[7px]" aria-hidden="true"><path d="M0 3.5h7" stroke="#222" strokeWidth="1.5" /></svg>
          </button>
          <input
            type="range"
            aria-label="Zoom"
            defaultValue={48}
            className="h-px w-[65px] appearance-none bg-[#9a9996] [&::-webkit-slider-thumb]:h-[7px] [&::-webkit-slider-thumb]:w-[3px] [&::-webkit-slider-thumb]:appearance-none [&::-webkit-slider-thumb]:border [&::-webkit-slider-thumb]:border-[#555] [&::-webkit-slider-thumb]:bg-[#f6f5f4]"
          />
          <button type="button" aria-label="Zoom In">
            <svg viewBox="0 0 7 7" className="size-[7px]" aria-hidden="true"><path d="M0 3.5h7M3.5 0v7" stroke="#222" strokeWidth="1.5" /></svg>
          </button>
        </span>
        <span className="justify-center">100%</span>
      </footer>
    </div>
  );
}
